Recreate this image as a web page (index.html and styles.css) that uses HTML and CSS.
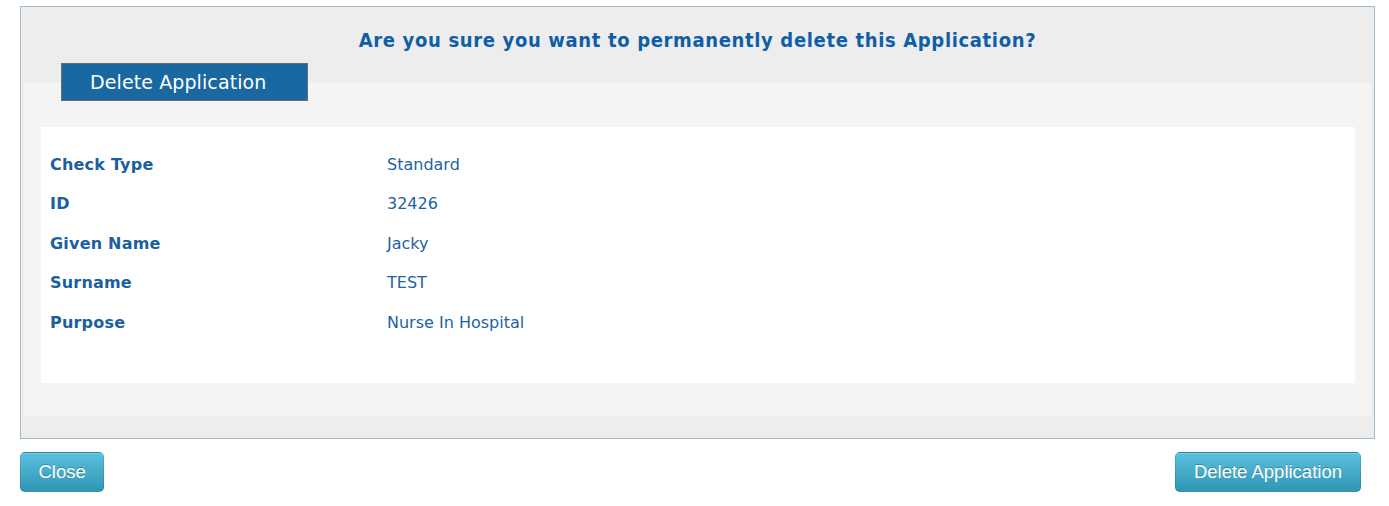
FILE: index.html
```html
<!DOCTYPE html>
<html lang="en">
<head>
<meta charset="utf-8">
<title>Delete Application</title>
<link rel="stylesheet" href="styles.css">
</head>
<body>
<div class="page">
  <section class="panel">
    <h1 class="title">Are you sure you want to permanently delete this Application?</h1>
    <fieldset class="details">
      <legend class="details-legend">Delete Application</legend>
      <div class="card">
        <dl class="rows">
          <div class="row"><dt class="label">Check Type</dt><dd class="value">Standard</dd></div>
          <div class="row"><dt class="label">ID</dt><dd class="value">32426</dd></div>
          <div class="row"><dt class="label">Given Name</dt><dd class="value">Jacky</dd></div>
          <div class="row"><dt class="label">Surname</dt><dd class="value">TEST</dd></div>
          <div class="row"><dt class="label">Purpose</dt><dd class="value">Nurse In Hospital</dd></div>
        </dl>
      </div>
    </fieldset>
  </section>
  <div class="actions">
    <button class="btn" type="button">Close</button>
    <button class="btn" type="button">Delete Application</button>
  </div>
</div>
</body>
</html>
```

FILE: styles.css
```css
html, body {
  margin: 0;
  padding: 0;
  background: #ffffff;
}

body {
  font-family: "DejaVu Sans", Verdana, sans-serif;
  color: #1a61a0;
}

.page {
  padding: 6px 14px 0 20px;
}

.panel {
  border: 1px solid #9fbbd0;
  background: #ededed;
  padding: 0 3px 22px 3px;
}

.title {
  margin: 0;
  padding-top: 21px;
  font-family: "DejaVu Sans Condensed", "DejaVu Sans", sans-serif;
  font-weight: bold;
  font-size: 20px;
  line-height: 24px;
  letter-spacing: 0.65px;
  text-align: center;
  color: #105ea6;
}

.details {
  margin: 11px 0 0 0;
  border: 0;
  padding: 26px 16px 33px 17px;
  background: #f5f4f4;
  min-width: 0;
}

.details-legend {
  box-sizing: border-box;
  width: 247px;
  margin-left: 20px;
  padding: 0 0 0 28px;
  border: 1px solid #6b6b6b;
  background: #1968a1;
  color: #ffffff;
  font-size: 19px;
  line-height: 36px;
  letter-spacing: 0.1px;
}

.card {
  background: #ffffff;
  padding: 18px 9px 40.5px 9px;
}

.rows {
  margin: 0;
}

.row {
  display: grid;
  grid-template-columns: 337px 1fr;
  height: 39.5px;
  align-items: center;
  font-size: 16px;
  line-height: 20px;
}

.label {
  font-weight: bold;
  color: #1a5f9e;
  letter-spacing: 0.2px;
}

.value {
  margin: 0;
  color: #1d63a2;
}

.actions {
  display: flex;
  justify-content: space-between;
  margin: 13px 14px 0 0;
}

.btn {
  height: 40px;
  padding: 0 18px;
  font-family: "Liberation Sans", Arial, sans-serif;
  font-size: 18.5px;
  color: #ffffff;
  text-shadow: 0 -1px 0 rgba(0, 0, 0, 0.25);
  background-color: #49afcd;
  background-image: linear-gradient(to bottom, #5bc0de, #2f96b4);
  border: 1px solid;
  border-color: rgba(0, 0, 0, 0.1) rgba(0, 0, 0, 0.1) rgba(0, 0, 0, 0.25);
  border-radius: 5px;
  box-shadow: inset 0 1px 0 rgba(255, 255, 255, 0.2), 0 1px 2px rgba(0, 0, 0, 0.05);
  cursor: pointer;
}

.btn:first-child {
  padding: 0 17.5px;
}
```
